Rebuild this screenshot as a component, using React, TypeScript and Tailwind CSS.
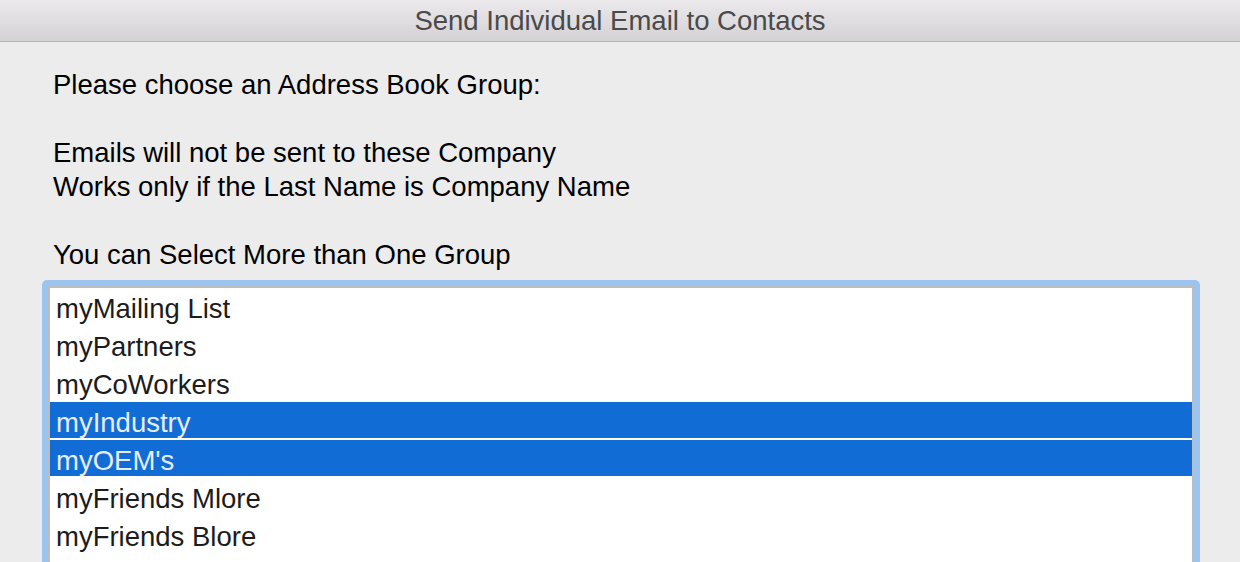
const groups = [
  { name: "myMailing List", selected: false },
  { name: "myPartners", selected: false },
  { name: "myCoWorkers", selected: false },
  { name: "myIndustry", selected: true },
  { name: "myOEM's", selected: true },
  { name: "myFriends Mlore", selected: false },
  { name: "myFriends Blore", selected: false },
];

export default function App() {
  return (
    <div
      className="w-[1240px] h-[562px] overflow-hidden bg-[#ececec]"
      style={{ fontFamily: '"Liberation Sans", Arial, sans-serif' }}
    >
      <div className="h-[42px] border-b border-[#b5b5b5] bg-gradient-to-b from-[#ebe9eb] to-[#d4d2d4] flex items-center justify-center">
        <span className="text-[27.5px] text-[#4a4a4a] leading-none">Send Individual Email to Contacts</span>
      </div>

      <div className="pt-[26px] pl-[42px] pr-[40px]">
        <div className="pl-[11px] text-[27.5px] leading-[34px] text-black">
          <p>Please choose an Address Book Group:</p>
          <p>&nbsp;</p>
          <p>Emails will not be sent to these Company</p>
          <p>Works only if the Last Name is Company Name</p>
          <p>&nbsp;</p>
          <p>You can Select More than One Group</p>
        </div>

        <div className="mt-[8px] h-[300px] rounded-[5px] border-[6px] border-[#9bc4ef]">
          <div className="h-full border-2 border-[#bdbdbd] bg-white">
            {groups.map((g) => (
              <div key={g.name} className="h-[38px] flex flex-col">
                <div
                  className={
                    g.selected
                      ? "h-[36px] bg-[#126cd5] text-[#e6edf9] flex items-center pl-[6px] pt-[6px] text-[27.5px]"
                      : "h-[36px] text-[#1c1c1c] flex items-center pl-[6px] pt-[6px] text-[27.5px]"
                  }
                >
                  {g.name}
                </div>
              </div>
            ))}
          </div>
        </div>
      </div>
    </div>
  );
}
